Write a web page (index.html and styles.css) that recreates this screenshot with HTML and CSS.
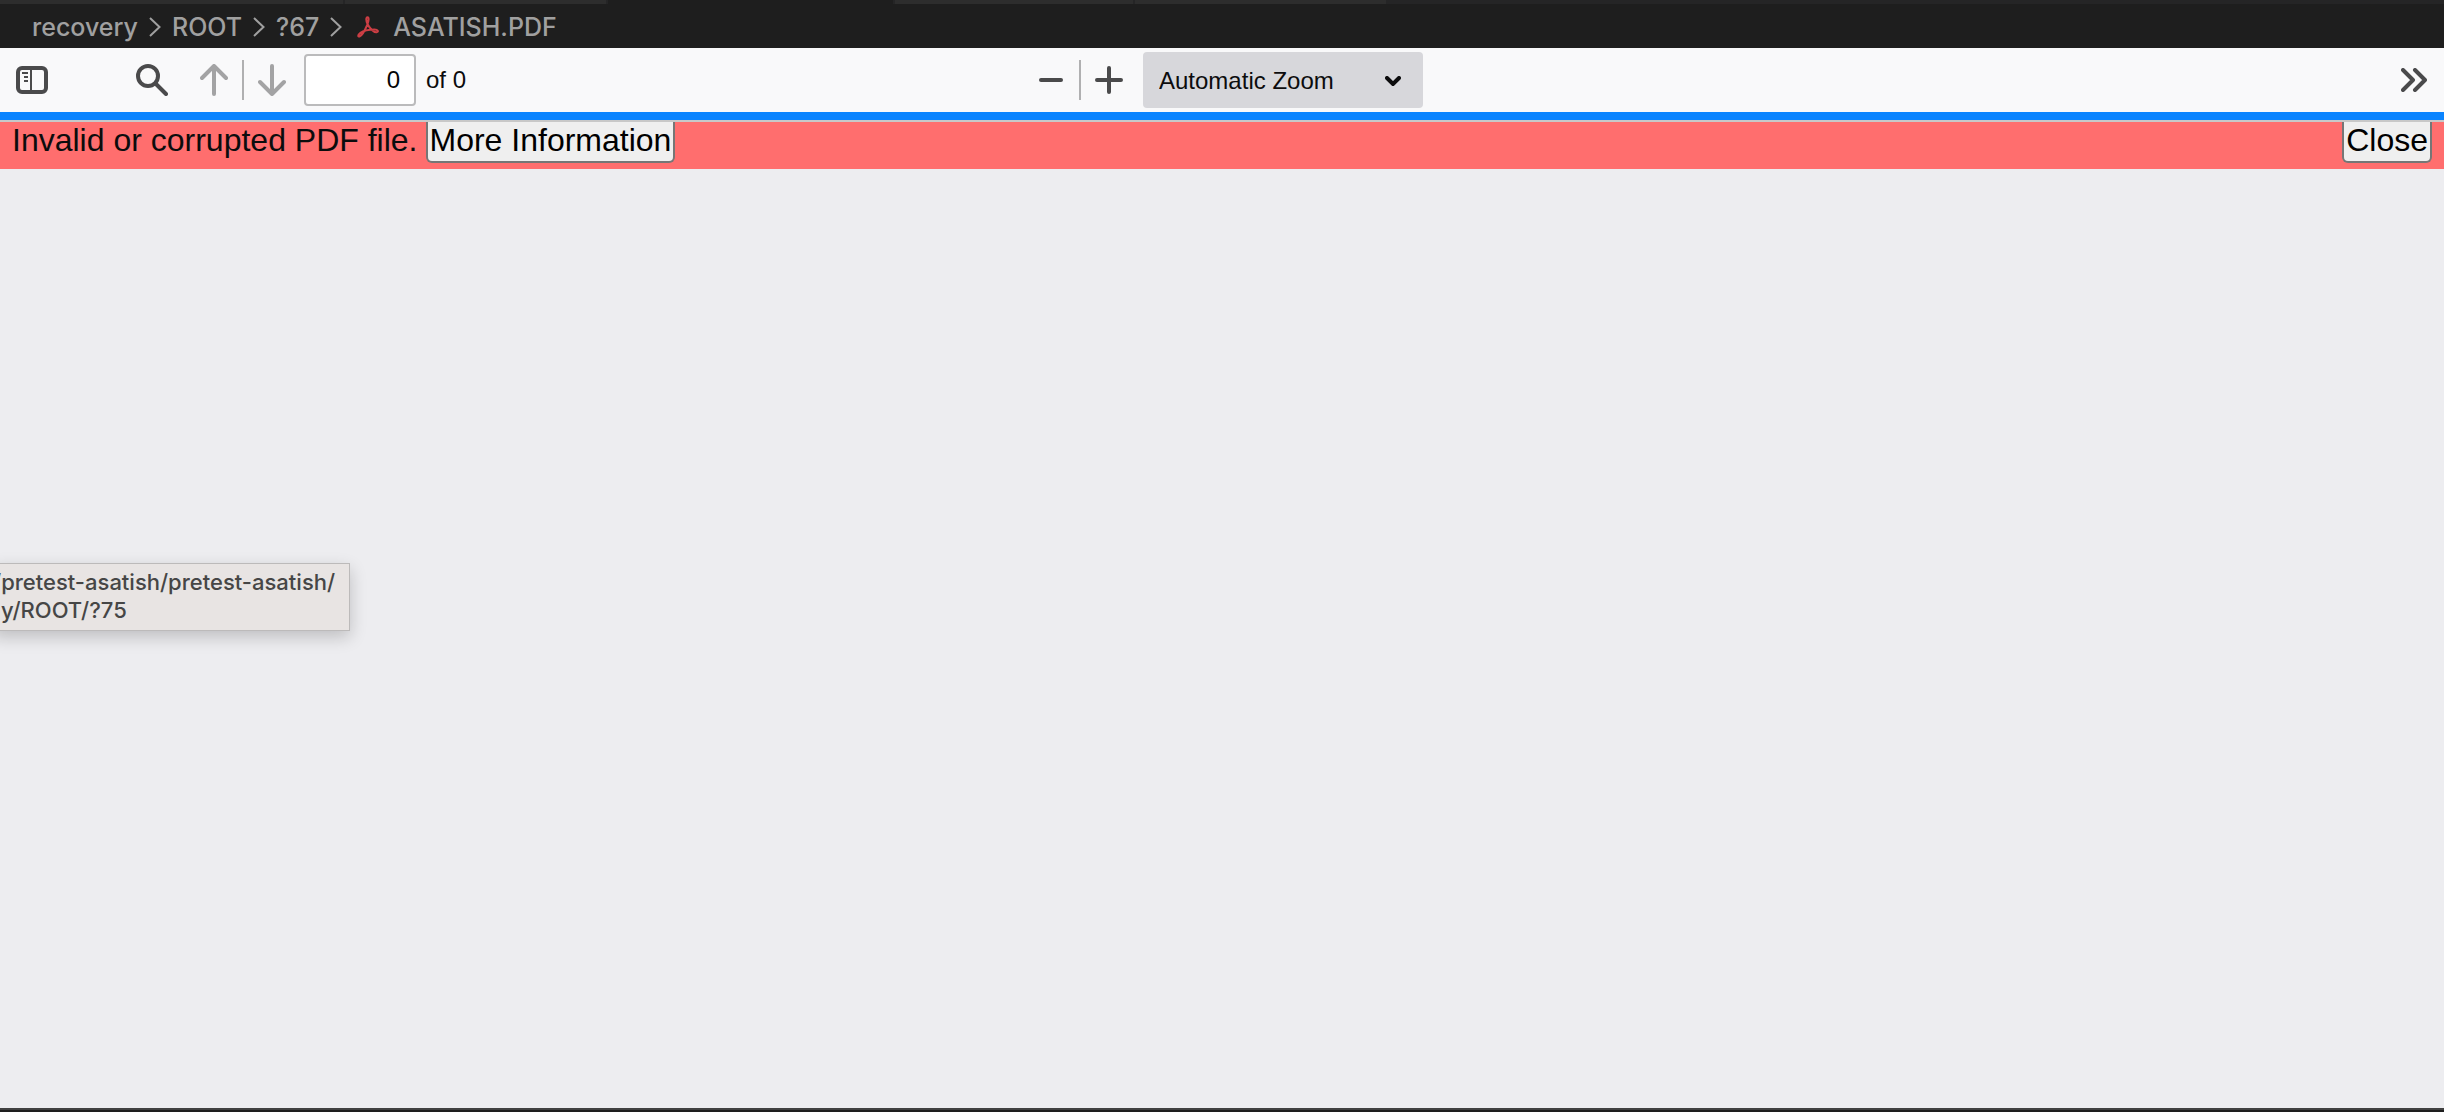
FILE: index.html
```
<!DOCTYPE html>
<html lang="en">
<head>
    <meta charset="UTF-8">
    <meta name="viewport" content="width=device-width, initial-scale=1.0">
    <title>ASATISH.PDF</title>
    <link rel="stylesheet" href="styles.css">
</head>
<body>
    <div class="tab-strip">
        <div class="tab tab-wide"></div>
        <div class="tab tab-medium"></div>
        <div class="tab tab-active"></div>
        <div class="tab tab-small"></div>
        <div class="tab tab-last"></div>
    </div>

    <nav class="breadcrumbs" aria-label="Breadcrumbs">
        <a href="#">recovery</a>
        <svg class="crumb-arrow" viewBox="0 0 12 20"><path d="M1 1l9.500 9L1 19"/></svg>
        <a href="#">ROOT</a>
        <svg class="crumb-arrow" viewBox="0 0 12 20"><path d="M1 1l9.500 9L1 19"/></svg>
        <a href="#">?67</a>
        <svg class="crumb-arrow" viewBox="0 0 12 20"><path d="M1 1l9.500 9L1 19"/></svg>
        <a href="#" class="crumb-file">
            <svg class="pdf-icon" viewBox="0 0 22 22"><path d="M10.500 1.200C8.800 1.200 9 5 10.500 8C12.500 12 16.500 16.500 19.500 16.200C22 15.800 21 13.600 17.500 13.600C13 13.600 6 15.200 3 17.200C.5 19 1 21 2.500 20.500C5 19.500 8.500 13 10.200 9C11.800 5 12.200 1.200 10.500 1.200z"/></svg>
            ASATISH.PDF
        </a>
    </nav>

    <div class="toolbar">
        <div class="toolbar-left">
            <button class="icon-button sidebar-toggle" aria-label="Toggle Sidebar">
                <svg width="32" height="28" viewBox="0 0 32 28">
                    <rect x="2" y="2" width="28" height="24" rx="4" fill="none" stroke="currentColor" stroke-width="4"/>
                    <path d="M15 3v22M6 7h6M8 11h4M8 15h4" fill="none" stroke="currentColor" stroke-width="2"/>
                </svg>
            </button>
            <button class="icon-button" aria-label="Find">
                <svg width="32" height="32" viewBox="0 0 32 32" fill="none" stroke="currentColor" stroke-width="4" stroke-linecap="round">
                    <circle cx="12" cy="12" r="10"/>
                    <path d="M19.500 19.500L30 30"/>
                </svg>
            </button>
            <div class="page-buttons">
                <button class="icon-button" aria-label="Previous Page" disabled>
                    <svg width="28" height="32" viewBox="0 0 28 32" class="stroke-icon"><path d="M14 30V3M2 14L14 2l12 12"/></svg>
                </button>
                <span class="separator"></span>
                <button class="icon-button" aria-label="Next Page" disabled>
                    <svg width="28" height="32" viewBox="0 0 28 32" class="stroke-icon"><path d="M14 2v27M2 18l12 12 12-12"/></svg>
                </button>
            </div>
            <input class="page-number" id="page-number" type="text" value="0" aria-label="Page">
            <label class="page-total" for="page-number">of 0</label>
        </div>

        <div class="toolbar-middle">
            <button class="icon-button" aria-label="Zoom Out">
                <svg width="28" height="28" viewBox="0 0 28 28" class="stroke-icon"><path d="M4 14h20"/></svg>
            </button>
            <span class="separator"></span>
            <button class="icon-button" aria-label="Zoom In">
                <svg width="28" height="28" viewBox="0 0 28 28" class="stroke-icon"><path d="M2 14h24M14 2v24"/></svg>
            </button>
            <div class="zoom-select">
                <select aria-label="Zoom">
                    <option>Automatic Zoom</option>
                </select>
                <svg class="select-arrow" width="16" height="10" viewBox="0 0 16 10"><path d="M2 2l6 6 6-6"/></svg>
            </div>
        </div>

        <div class="toolbar-right">
            <button class="icon-button" aria-label="Tools">
                <svg width="26" height="24" viewBox="0 0 26 24" class="stroke-icon"><path d="M2 2l10 10L2 22M14 2l10 10-10 10"/></svg>
            </button>
        </div>
    </div>

    <div class="loading-bar"></div>

    <div class="error-bar" role="alert">
        <span>Invalid or corrupted PDF file.</span>
        <button class="error-button">More Information</button>
        <button class="error-button error-close">Close</button>
    </div>

    <main class="viewer">
        <div class="path-tooltip" role="tooltip">/pretest-asatish/pretest-asatish/<br><span class="path-end">y/ROOT/?75</span></div>
    </main>

    <div class="bottom-panel"></div>
</body>
</html>
```
FILE: styles.css
```
:root {
    --editor-bg: #1e1e1e;
    --tab-bg: #2d2d2d;
    --toolbar-bg: #f9f9fa;
    --icon-color: #4a4a4b;
    --error-color: #ff6e6e;
    --viewer-bg: #ededf0;
}

* {
    box-sizing: border-box;
}

body {
    margin: 0;
    min-height: 100vh;
    display: flex;
    flex-direction: column;
    background: var(--editor-bg);
    font-family: "Liberation Sans", Arial, sans-serif;
    font-size: 24px;
    overflow: hidden;
}

button,
input,
select {
    font: inherit;
}

svg {
    display: block;
    flex-shrink: 0;
}

/* Bottom edge of the editor tabs */
.tab-strip {
    display: flex;
    gap: 2px;
    height: 4px;
    background: #252526;
}

.tab {
    background: var(--tab-bg);
}

.tab-wide {
    width: 343px;
}

.tab-medium {
    width: 261px;
}

.tab-active {
    width: 285px;
    background: var(--editor-bg);
}

.tab-small {
    width: 238px;
}

.tab-last {
    width: 251px;
}

.breadcrumbs {
    display: flex;
    align-items: center;
    gap: 11px;
    height: 44px;
    padding: 2px 32px 0;
    font-family: Inter, sans-serif;
    font-size: 25px;
    font-weight: 500;
    line-height: 32px;
}

.breadcrumbs a {
    color: #a0a0a0;
    text-decoration: none;
}

.crumb-arrow {
    width: 12px;
    height: 20px;
    fill: none;
    stroke: #a0a0a0;
    stroke-width: 2;
}

.breadcrumbs .crumb-file {
    display: flex;
    align-items: center;
    gap: 14px;
    margin-left: 4px;
}

.pdf-icon {
    width: 22px;
    height: 22px;
    fill: none;
    stroke: #cc3e44;
    stroke-width: 2;
}

.toolbar {
    display: grid;
    grid-template-columns: 1fr auto 1fr;
    height: 64px;
    padding: 0 2px 0 4px;
    background: var(--toolbar-bg);
}

.toolbar-left,
.toolbar-middle,
.toolbar-right,
.page-buttons {
    display: flex;
    align-items: center;
}

.toolbar-right {
    justify-content: flex-end;
}

.icon-button {
    display: flex;
    align-items: center;
    justify-content: center;
    width: 56px;
    height: 56px;
    padding: 0;
    border: 0;
    background: none;
    color: var(--icon-color);
}

.icon-button:disabled {
    color: #a3a3a4;
}

.sidebar-toggle {
    margin-right: 64px;
}

.page-buttons {
    margin: 0 4px 0 6px;
}

.stroke-icon {
    fill: none;
    stroke: currentColor;
    stroke-width: 4;
    stroke-linecap: round;
    stroke-linejoin: round;
}

.separator {
    width: 2px;
    height: 40px;
    background: #b0b0b1;
}

.page-number {
    width: 112px;
    height: 52px;
    padding: 0 14px;
    border: 2px solid #bbbbbc;
    border-radius: 4px;
    background: #fff;
    color: #060606;
    text-align: right;
}

.page-total {
    margin-left: 10px;
    color: #0c0c0d;
}

.zoom-select {
    position: relative;
    margin-left: 6px;
}

.zoom-select select {
    display: block;
    width: 280px;
    height: 56px;
    padding: 0 16px;
    border: 0;
    border-radius: 4px;
    background: #d7d7db;
    color: #0c0c0d;
    appearance: none;
}

.select-arrow {
    position: absolute;
    top: 24px;
    right: 22px;
    fill: none;
    stroke: #0c0c0d;
    stroke-width: 4;
    stroke-linecap: round;
    pointer-events: none;
}

.loading-bar {
    height: 10px;
    border-bottom: 2px solid #c8c8c8;
    background: #0a84ff;
}

.error-bar {
    display: flex;
    align-items: flex-start;
    gap: 8px;
    height: 47px;
    padding: 0 12px;
    background: var(--error-color);
    color: #0c0c0d;
    font-size: 32px;
    line-height: 36px;
}

.error-button {
    padding: 0 2px 3px;
    border: 2px solid #767676;
    border-top: 0;
    border-radius: 0 0 6px 6px;
    background: #efefef;
    color: #000;
    line-height: 36px;
}

.error-close {
    margin-left: auto;
}

.viewer {
    position: relative;
    flex: 1;
    background: var(--viewer-bg);
}

/* Hangs over the left edge of the window */
.path-tooltip {
    position: absolute;
    top: 394px;
    left: -8px;
    padding: 4px 14px 6px 0;
    border: 1px solid #bcbaba;
    background: #e8e4e3;
    box-shadow: 0 6px 16px rgba(0, 0, 0, 0.2);
    color: #464646;
    font-family: Inter, sans-serif;
    font-size: 22px;
    font-weight: 500;
    line-height: 28px;
    white-space: nowrap;
}

.path-end {
    margin-left: 8px;
}

.bottom-panel {
    height: 4px;
    border-top: 2px solid #414141;
    background: var(--editor-bg);
}
```
